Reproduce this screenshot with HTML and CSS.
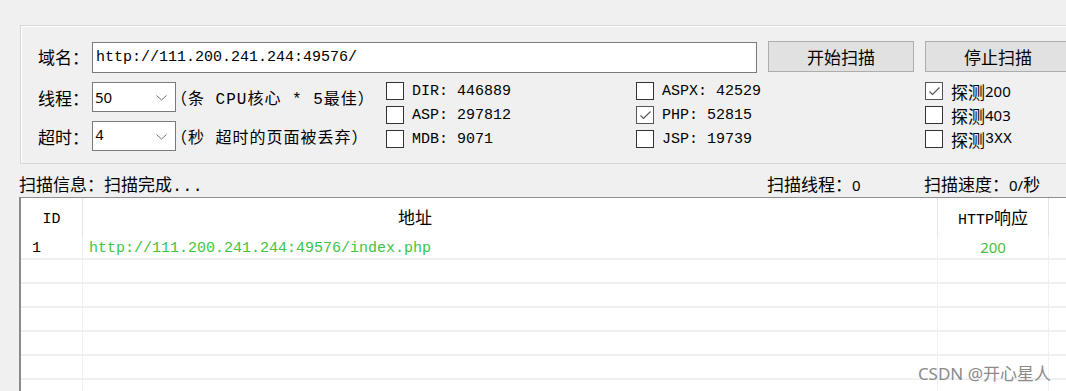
FILE: index.html
```html
<!DOCTYPE html>
<html lang="zh-CN">
<head>
  <meta charset="UTF-8">
  <title>扫描器</title>
  <link rel="stylesheet" href="styles.css">
</head>
<body>
  <div class="window">
    <div class="group-box">
      <div class="url-row">
        <span class="label">域名：</span>
        <div class="text-input">http://111.200.241.244:49576/</div>
        <button class="btn">开始扫描</button>
        <button class="btn">停止扫描</button>
      </div>

      <div class="options">
        <div class="settings">
          <div class="setting-row">
            <span class="label">线程：</span>
            <div class="combo"><span class="combo-value sans">50</span><svg class="chevron" width="11" height="6" viewBox="0 0 11 6"><polyline points="0.5,0.5 5.5,5 10.5,0.5" fill="none" stroke="#707070" stroke-width="1"/></svg></div>
            <span class="hint">（条 CPU核心 * 5最佳）</span>
          </div>
          <div class="setting-row">
            <span class="label">超时：</span>
            <div class="combo"><span class="combo-value">4</span><svg class="chevron" width="11" height="6" viewBox="0 0 11 6"><polyline points="0.5,0.5 5.5,5 10.5,0.5" fill="none" stroke="#707070" stroke-width="1"/></svg></div>
            <span class="hint">（秒 超时的页面被丢弃）</span>
          </div>
        </div>

        <div class="check-col col-a">
          <label class="check"><span class="box"></span>DIR: 446889</label>
          <label class="check"><span class="box"></span>ASP: 297812</label>
          <label class="check"><span class="box"></span>MDB: 9071</label>
        </div>
        <div class="check-col col-b">
          <label class="check"><span class="box"></span>ASPX: 42529</label>
          <label class="check"><span class="box checked"><svg width="15" height="15" viewBox="0 0 15 15"><polyline points="2.5,7.5 5.5,10.5 12.5,3.5" fill="none" stroke="#555" stroke-width="1.2"/></svg></span>PHP: 52815</label>
          <label class="check"><span class="box"></span>JSP: 19739</label>
        </div>
        <div class="check-col col-c">
          <label class="check cjk"><span class="box checked"><svg width="15" height="15" viewBox="0 0 15 15"><polyline points="2.5,7.5 5.5,10.5 12.5,3.5" fill="none" stroke="#555" stroke-width="1.2"/></svg></span>探测<span class="sans">200</span></label>
          <label class="check cjk"><span class="box"></span>探测<span class="sans">403</span></label>
          <label class="check cjk"><span class="box"></span>探测<span class="mono">3XX</span></label>
        </div>
      </div>
    </div>

    <div class="status-bar">
      <span class="status-info">扫描信息：扫描完成<span class="mono">...</span></span>
      <span class="status-threads">扫描线程：<span class="sans">0</span></span>
      <span class="status-speed">扫描速度：<span class="sans">0/</span>秒</span>
    </div>

    <div class="result-table">
      <div class="table-row header">
        <div class="cell c-id">ID</div>
        <div class="cell c-url">地址</div>
        <div class="cell c-code"><span class="mono">HTTP</span>响应</div>
        <div class="cell c-rest"></div>
      </div>
      <div class="table-row">
        <div class="cell c-id">1</div>
        <div class="cell c-url hit">http://111.200.241.244:49576/index.php</div>
        <div class="cell c-code hit sans">200</div>
        <div class="cell c-rest"></div>
      </div>
      <div class="table-row"><div class="cell c-id"></div><div class="cell c-url"></div><div class="cell c-code"></div><div class="cell c-rest"></div></div>
      <div class="table-row"><div class="cell c-id"></div><div class="cell c-url"></div><div class="cell c-code"></div><div class="cell c-rest"></div></div>
      <div class="table-row"><div class="cell c-id"></div><div class="cell c-url"></div><div class="cell c-code"></div><div class="cell c-rest"></div></div>
      <div class="table-row"><div class="cell c-id"></div><div class="cell c-url"></div><div class="cell c-code"></div><div class="cell c-rest"></div></div>
      <div class="table-row"><div class="cell c-id"></div><div class="cell c-url"></div><div class="cell c-code"></div><div class="cell c-rest"></div></div>
      <div class="table-row"><div class="cell c-id"></div><div class="cell c-url"></div><div class="cell c-code"></div><div class="cell c-rest"></div></div>
    </div>

    <div class="watermark">CSDN @开心星人</div>
  </div>
</body>
</html>
```

FILE: styles.css
```css
* {
  margin: 0;
  padding: 0;
  box-sizing: border-box;
}

body {
  background: #f0f0f0;
  font-family: "Liberation Mono", "Noto Sans CJK SC", monospace;
  font-size: 15px;
  color: #000;
  overflow: hidden;
}

.window {
  position: relative;
  width: 1066px;
  height: 391px;
  overflow: hidden;
  padding-top: 25px;
}

.sans {
  font-family: "Noto Sans", "Noto Sans CJK SC", sans-serif;
  font-size: 15px;
}

.mono {
  font-family: "Liberation Mono", monospace;
  font-size: 15px;
}

.cjk,
.label,
.status-bar {
  font-family: "Noto Sans CJK SC", sans-serif;
  font-size: 17px;
}

/* top options frame */
.group-box {
  margin-left: 20px;
  width: 1100px;
  height: 139px;
  border: 1px solid #d5d5d5;
  box-shadow: inset 1px 1px 0 #fff;
  padding: 15px 0 0 17px;
}

.url-row {
  display: flex;
  align-items: flex-start;
  height: 32px;
}

.url-row .label {
  width: 54px;
  line-height: 32px;
}

.text-input {
  width: 665px;
  height: 31px;
  margin-top: 1px;
  background: #fff;
  border: 1px solid #7a7a7a;
  padding-left: 3px;
  line-height: 29px;
  white-space: nowrap;
}

.btn {
  width: 146px;
  height: 31px;
  margin-left: 11px;
  background: #e1e1e1;
  border: 1px solid #adadad;
  font-family: "Noto Sans CJK SC", sans-serif;
  font-size: 17px;
  color: #000;
}

.options {
  display: flex;
  margin-top: 6px;
}

.settings {
  width: 348px;
  padding-top: 3px;
  display: flex;
  flex-direction: column;
  gap: 9px;
}

.setting-row {
  display: flex;
  align-items: center;
  height: 30px;
}

.setting-row .label {
  width: 54px;
}

.combo {
  width: 84px;
  height: 30px;
  background: #fff;
  border: 1px solid #7a7a7a;
  display: flex;
  align-items: center;
  justify-content: space-between;
  padding: 0 8px 0 2px;
}

.chevron {
  margin-top: 2px;
}

.hint {
  margin-left: -5px;
  font-size: 16px;
  letter-spacing: 1px;
  white-space: nowrap;
}

.check-col {
  display: flex;
  flex-direction: column;
}

.col-a {
  width: 250px;
}

.col-b {
  width: 289px;
}

.check {
  display: flex;
  align-items: center;
  height: 24px;
  white-space: nowrap;
}

.box {
  width: 18px;
  height: 18px;
  border: 1px solid #333;
  background: #fff;
  margin-right: 8px;
  display: flex;
  align-items: center;
  justify-content: center;
}

.box.checked {
  border-color: #555;
}

/* status line */
.status-bar {
  display: grid;
  grid-template-columns: 748px 157px auto;
  margin: 9px 0 0 19px;
  height: 22px;
  line-height: 22px;
  white-space: nowrap;
}

.status-bar .mono {
  font-size: 17px;
}

/* result list */
.result-table {
  margin: 2px 0 0 19px;
  width: 1100px;
  background: #fff;
  border-top: 1px solid #8f8f8f;
  border-left: 2px solid #8a8a8a;
}

.table-row {
  display: flex;
  height: 24px;
}

.table-row.header {
  height: 38px;
}

.cell {
  height: 100%;
  border-right: 1px solid #f0f0f0;
  border-bottom: 2px solid #f0f0f0;
  line-height: 22px;
  white-space: nowrap;
}

.c-id,
.c-url {
  padding-top: 2px;
}

.header .cell {
  border-bottom: none;
  line-height: 38px;
  padding-top: 0;
  border-right: 1px solid #e5e5e5;
}

.header .c-id {
  text-align: center;
  padding: 3px 0 0 0;
}

.c-id {
  width: 62px;
  padding-left: 11px;
}

.c-url {
  width: 855px;
  padding-left: 6px;
}

.header .c-url {
  padding-left: 315px;
  font-family: "Noto Sans CJK SC", sans-serif;
  font-size: 17px;
}

.c-code {
  width: 111px;
  text-align: center;
}

.header .c-code {
  font-family: "Noto Sans CJK SC", sans-serif;
  font-size: 17px;
}

.c-rest {
  flex: 1;
  border-right: none;
}

.hit {
  color: #3ec43e;
}

.watermark {
  position: absolute;
  right: 15px;
  bottom: 6px;
  font-family: "Noto Sans", "Noto Sans CJK SC", sans-serif;
  font-size: 17px;
  color: #8a8a8a;
}
```
